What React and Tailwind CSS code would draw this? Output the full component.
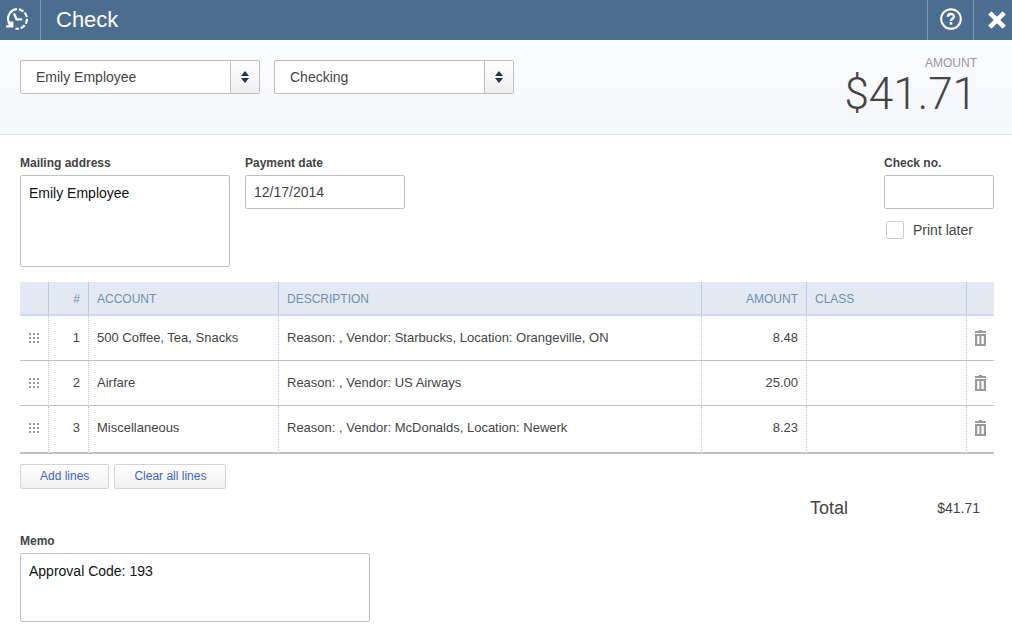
import { useState } from "react";

const lines = [
    { id: 1, account: "500 Coffee, Tea, Snacks", description: "Reason: , Vendor: Starbucks, Location: Orangeville, ON", amount: "8.48" },
    { id: 2, account: "Airfare", description: "Reason: , Vendor: US Airways", amount: "25.00" },
    { id: 3, account: "Miscellaneous", description: "Reason: , Vendor: McDonalds, Location: Newerk", amount: "8.23" },
];

function HistoryIcon() {
    return <svg width="24" height="24" viewBox="0 0 24 24" fill="none" stroke="#fff">
        <path d="M5 17.5 A9.6 9.6 0 0 1 12 2.2" strokeWidth="2.2" />
        <path d="M13.8 2.3 A9.7 9.7 0 0 1 10.5 21.6" strokeWidth="2.2" strokeDasharray="5 1.8" />
        <path d="M9 6.6 L11.6 12.4 L17.2 12.4" strokeWidth="2.4" />
        <path d="M2.4 14.4 L8.4 14.4 L8.4 20.4 L1 20.4 L1 18.8 L4.4 17.6 Z" fill="#fff" stroke="none" />
    </svg>
}

function HelpIcon() {
    return <svg width="22" height="22" viewBox="0 0 22 22" fill="none" stroke="#fff">
        <circle cx="11" cy="11" r="9.8" strokeWidth="2" />
        <path d="M7.9 8.8 C7.9 5.2 14 5.2 14 8.5 C14 10.6 11 10.4 11 13" strokeWidth="2.4" />
        <path d="M11 14.2 V16.6" strokeWidth="2.6" />
    </svg>
}

function CloseIcon() {
    return <svg width="18" height="18" viewBox="0 0 18 18" fill="none" stroke="#fff" strokeWidth="4.6">
        <path d="M1.8 1.8 L16.2 16.2 M16.2 1.8 L1.8 16.2" />
    </svg>
}

function GripIcon() {
    return <svg width="10" height="10" viewBox="0 0 10 10" fill="#999" className="block">
        {[0, 4, 8].map((y) => [0, 4, 8].map((x) => <rect key={`${x}-${y}`} x={x} y={y} width="2" height="2" />))}
    </svg>
}

function TrashIcon() {
    return <svg width="11" height="16" viewBox="0 0 11 16" fill="#999" className="block">
        <path d="M4 0 H7 V1 H11 V3 H0 V1 H4 Z" />
        <path fillRule="evenodd" d="M0 4 H11 V16 H0 Z M2.2 6 V14 H4.4 V6 Z M6.4 6 V14 H8.8 V6 Z" />
    </svg>
}

function Picker({ label, options }) {
    return <div className="relative w-60">
        <select aria-label={label} className="block h-[34px] w-full appearance-none rounded-xs border border-[#c0c0c0] bg-white pr-8 pl-[15px] text-sm text-[#444]">
            {options.map((o) => <option key={o}>{o}</option>)}
        </select>
        <span className="pointer-events-none absolute inset-y-px right-px flex w-[29px] items-center justify-center border-l border-[#c0c0c0] bg-linear-to-b from-white to-[#eee]">
            <svg width="8" height="12" viewBox="0 0 8 12" fill="#1b3350">
                <path d="M4 0 L8 5 H0 Z M0 7 H8 L4 12 Z" />
            </svg>
        </span>
    </div>
}

const th = "h-[34px] border-b-2 border-[#c9daec] px-2 pt-px text-xs font-normal";
const thLine = "border-r border-r-[#b9cde6]";
const td = "border-[#c0c0c0] px-2 pt-3 pb-[13px] align-top leading-[19px]";
const tdLine = "border-r border-r-[#c0c0c0] [border-right-style:dotted]";
const box = "block rounded-xs border border-[#c0c0c0] bg-white";
const smallButton = "h-[25px] rounded-xs border border-[#d4d4d4] bg-linear-to-b from-white to-[#f0f0f0] px-[19px] pb-0.5 text-xs text-[#3f65cc]";

export default function App() {
    const [rows, setRows] = useState(lines);
    const [printLater, setPrintLater] = useState(false);

    function addLine() {
        setRows([...rows, { id: Date.now(), account: "", description: "", amount: "" }]);
    }

    return <div className="bg-white font-['Liberation_Sans',Arial,sans-serif] text-[13px] text-[#444]">
        <header className="flex h-10 items-stretch bg-[#4a6d90] text-white">
            <button aria-label="Recent checks" className="flex w-[41px] items-center border-r border-[#7d98b4] pb-0.5 pl-[5px]"><HistoryIcon /></button>
            <h1 className="flex flex-1 items-center pb-0.5 pl-[15px] text-[22px]">Check</h1>
            <button aria-label="Help" className="flex w-[46px] items-center justify-center border-l border-[#7d98b4] pb-0.5"><HelpIcon /></button>
            <button aria-label="Close" className="flex w-[39px] items-center justify-end border-l border-[#7d98b4] pr-[6px]"><CloseIcon /></button>
        </header>

        <section className="flex h-[95px] items-start justify-between border-b border-[#dfe6f0] bg-linear-to-b from-[#fafbfd] to-[#f5f7fb] pr-[35px] pl-5">
            <div className="flex gap-[14px] pt-5">
                <Picker label="Payee" options={["Emily Employee"]} />
                <Picker label="Bank account" options={["Checking"]} />
            </div>
            <div className="pt-4 text-right">
                <div className="text-xs leading-[14px] text-[#999]">AMOUNT</div>
                <div className="font-['Roboto',sans-serif] text-[44px] leading-[48px] font-light text-[#444]">$41.71</div>
            </div>
        </section>

        <main className="pt-5 pr-[18px] pb-[6px] pl-5">
            <div className="flex items-start gap-[15px]">
                <div>
                    <label htmlFor="address" className="block h-5 text-xs leading-4 font-bold">Mailing address</label>
                    <textarea id="address" defaultValue="Emily Employee" className={`${box} h-[92px] w-[210px] resize-none px-2 py-[9px] text-sm leading-4 text-[#111]`} />
                </div>
                <div>
                    <label htmlFor="date" className="block h-5 text-xs leading-4 font-bold">Payment date</label>
                    <input id="date" defaultValue="12/17/2014" className={`${box} h-[34px] w-40 px-2 text-sm`} />
                </div>
                <div className="ml-auto w-[110px]">
                    <label htmlFor="checkno" className="block h-5 text-xs leading-4 font-bold">Check no.</label>
                    <input id="checkno" className={`${box} h-[34px] w-full px-2 text-sm`} />
                    <label className="mt-3 flex items-center gap-[9px] pl-0.5 text-sm leading-[18px]">
                        <input type="checkbox" checked={printLater} onChange={(e) => setPrintLater(e.target.checked)} className="size-[18px] appearance-none rounded-xs border border-[#ccc] bg-white checked:bg-[#4a6d90]" />
                        Print later
                    </label>
                </div>
            </div>

            <table className="mt-[15px] w-full table-fixed border-separate border-spacing-0">
                <colgroup>
                    <col className="w-[29px]" />
                    <col className="w-10" />
                    <col className="w-[190px]" />
                    <col />
                    <col className="w-[105px]" />
                    <col className="w-40" />
                    <col className="w-[27px]" />
                </colgroup>
                <thead>
                    <tr className="bg-[#e3e9f3] text-[#6f8fb0]">
                        <th className={`${th} ${thLine}`}></th>
                        <th className={`${th} ${thLine} text-right`}>#</th>
                        <th className={`${th} ${thLine} text-left`}>ACCOUNT</th>
                        <th className={`${th} ${thLine} text-left`}>DESCRIPTION</th>
                        <th className={`${th} ${thLine} text-right`}>AMOUNT</th>
                        <th className={`${th} ${thLine} text-left`}>CLASS</th>
                        <th className={th}></th>
                    </tr>
                </thead>
                <tbody className="[&>tr:last-child>td]:border-b-2 [&>tr:last-child>td]:pb-[15px] [&>tr>td]:border-b">
                    {rows.map((row, i) => <tr key={row.id}>
                        <td className={`${td} ${tdLine}`}>
                            <div className="flex h-[19px] items-center pl-px"><GripIcon /></div>
                        </td>
                        <td className={`${td} ${tdLine} text-right`}>{i + 1}</td>
                        <td className={`${td} ${tdLine}`}>{row.account}</td>
                        <td className={`${td} ${tdLine}`}>{row.description}</td>
                        <td className={`${td} ${tdLine} text-right`}>{row.amount}</td>
                        <td className={`${td} ${tdLine}`}></td>
                        <td className={td}>
                            <button aria-label="Delete line" className="flex h-[19px] items-end pb-px" onClick={() => setRows(rows.filter((r) => r.id != row.id))}><TrashIcon /></button>
                        </td>
                    </tr>)}
                </tbody>
            </table>

            <div className="mt-[10px] flex gap-[5px]">
                <button className={smallButton} onClick={addLine}>Add lines</button>
                <button className={smallButton} onClick={() => setRows([])}>Clear all lines</button>
            </div>

            <div className="mt-[7px] flex items-center justify-end pr-[14px]">
                <span className="w-[120px] text-lg leading-6">Total</span>
                <span className="w-[50px] text-right text-sm leading-6">$41.71</span>
            </div>

            <label htmlFor="memo" className="mt-[13px] block h-5 text-xs leading-4 font-bold">Memo</label>
            <textarea id="memo" defaultValue="Approval Code: 193" className={`${box} h-[69px] w-[350px] resize-none px-2 py-[9px] text-sm leading-4 text-[#111]`} />
        </main>
    </div>
}
